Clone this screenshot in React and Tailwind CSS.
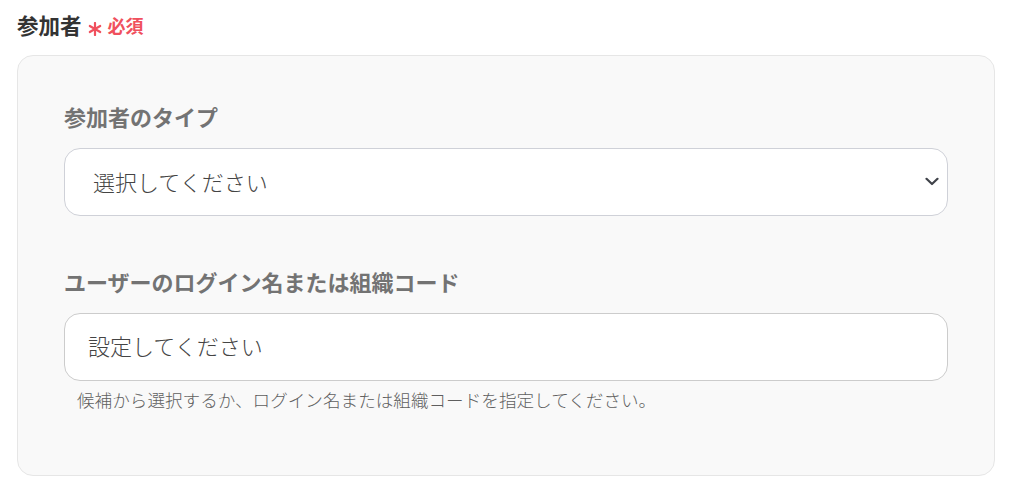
const Chevron = () => (
  <svg width="14" height="9" viewBox="0 0 14 9" fill="none" className="shrink-0">
    <path d="M1.5 1.8 L7 7 L12.5 1.8" stroke="#3f4249" strokeWidth="2.2" strokeLinecap="round" strokeLinejoin="round" />
  </svg>
);

const RequiredMark = () => (
  <svg width="14" height="14" viewBox="0 0 14 14" className="ml-[6px] mt-[8px] shrink-0">
    <g stroke="#f0505d" strokeWidth="2.2" strokeLinecap="round">
      <path d="M7 1 V13" />
      <path d="M1.8 4 L12.2 10" />
      <path d="M12.2 4 L1.8 10" />
    </g>
  </svg>
);

const Field = ({ label, children }) => (
  <div>
    <p className="text-[22px] leading-[26px] font-bold text-[#737373] mb-[19px]">{label}</p>
    {children}
  </div>
);

export default function App() {
  return (
    <div
      className="w-[1012px] h-[485px] bg-white px-[17px] pt-[9px]"
      style={{ fontFamily: '"Noto Sans CJK JP", "Noto Sans", sans-serif' }}
    >
      <div className="flex items-center h-[32px] mb-[14px]">
        <h2 className="text-[21.5px] font-bold text-[#333333] leading-[32px]">参加者</h2>
        <RequiredMark />
        <span className="ml-[6px] text-[18px] font-bold text-[#f0505d] leading-[32px]">必須</span>
      </div>

      <div className="w-[978px] h-[421px] rounded-[16px] border border-[#e6e6e6] bg-[#f9f9f9] px-[46px] pt-[47px]">
        <Field label="参加者のタイプ">
          <div className="h-[68px] rounded-[16px] border border-[#cfd1d8] bg-white flex items-center justify-between pl-[28px] pr-[8px] pb-[2px]">
            <span className="text-[22px] font-light text-[#444444]">選択してください</span>
            <Chevron />
          </div>
        </Field>

        <div className="mt-[52px]">
          <Field label="ユーザーのログイン名または組織コード">
            <div className="h-[68px] rounded-[16px] border border-[#cccccc] bg-white flex items-center pl-[23px] pb-[3px]">
              <span className="text-[22px] font-light text-[#444444]">設定してください</span>
            </div>
          </Field>
          <p className="mt-[7px] ml-[13px] text-[17.6px] leading-[24px] font-light text-[#5f5f5f]">
            候補から選択するか、ログイン名または組織コードを指定してください。
          </p>
        </div>
      </div>
    </div>
  );
}
